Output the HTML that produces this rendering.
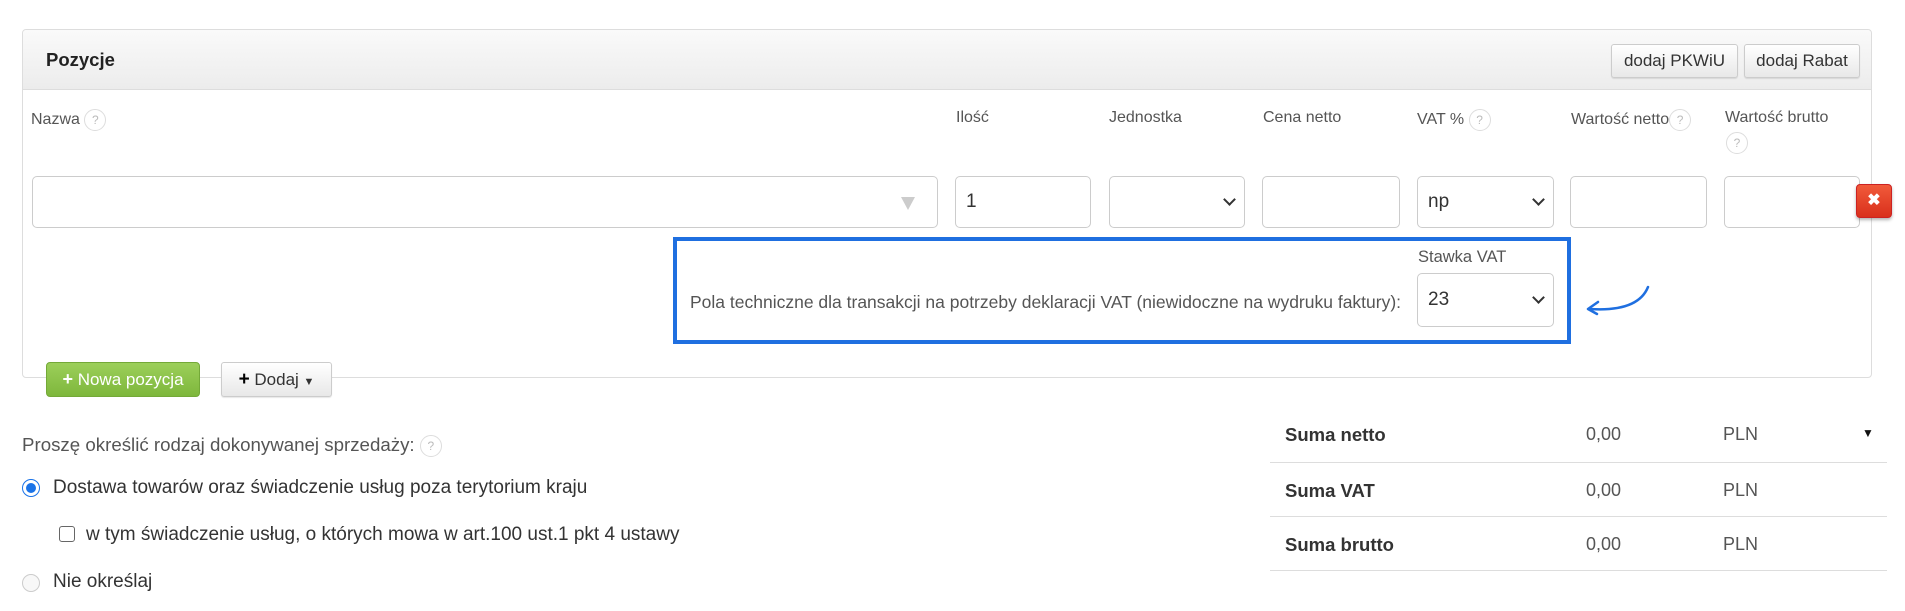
<!DOCTYPE html>
<html><head><meta charset="utf-8"><style>
*{box-sizing:border-box;margin:0;padding:0}
body{width:1905px;height:611px;background:#fff;font-family:"Liberation Sans",Arial,sans-serif;font-size:16px;color:#555;position:relative;overflow:hidden}
.a{position:absolute}
.panel{left:22px;top:29px;width:1850px;height:349px;border:1px solid #ddd;border-radius:4px}
.head{left:23px;top:30px;width:1848px;height:60px;background:linear-gradient(#fafafa,#ececec);border-bottom:1px solid #ddd;border-radius:4px 4px 0 0}
.btn{border:1px solid #ccc;border-radius:3px;background:linear-gradient(#fff,#e8e8e8);color:#333;font-size:17px;text-align:center;box-shadow:0 1px 1px rgba(0,0,0,.1)}
.inp{border:1px solid #ccc;border-radius:5px;background:#fff;height:52px;top:176px}
.lbl{top:109px;font-size:16px;color:#555}
.q{display:inline-block;width:22px;height:22px;border:1px solid #ddd;border-radius:50%;font-size:12px;color:#bbb;text-align:center;line-height:20px;vertical-align:middle}
.chev{position:absolute;right:10px;top:18px;width:9px;height:9px;border-right:2.5px solid #333;border-bottom:2.5px solid #333;transform:rotate(45deg)}
.val{position:absolute;left:10px;top:14px;font-size:19px;color:#333}
.sum{left:1270px;width:617px;height:1px;background:#ddd}
.st{font-weight:bold;color:#333;font-size:18.5px}
.nv{font-size:18px}
</style></head><body>
<div class="a panel"></div>
<div class="a head"></div>
<div class="a" style="left:46px;top:49px;font-weight:bold;font-size:18.5px;color:#222">Pozycje</div>
<div class="a btn" style="left:1611px;top:44px;width:127px;height:34px;line-height:32px">dodaj PKWiU</div>
<div class="a btn" style="left:1744px;top:44px;width:116px;height:34px;line-height:32px">dodaj Rabat</div>

<div class="a lbl" style="left:31px">Nazwa <span class="q">?</span></div>
<div class="a lbl" style="left:956px">Ilość</div>
<div class="a lbl" style="left:1109px">Jednostka</div>
<div class="a lbl" style="left:1263px">Cena netto</div>
<div class="a lbl" style="left:1417px">VAT % <span class="q">?</span></div>
<div class="a lbl" style="left:1571px">Wartość netto<span class="q">?</span></div>
<div class="a lbl" style="left:1725px">Wartość brutto</div>
<div class="a" style="left:1726px;top:132px"><span class="q">?</span></div>

<div class="a inp" style="left:32px;width:906px"><div style="position:absolute;right:22px;top:20px;width:0;height:0;border-left:7px solid transparent;border-right:7px solid transparent;border-top:13px solid #ccc"></div></div>
<div class="a inp" style="left:955px;width:136px"><span class="val">1</span></div>
<div class="a inp" style="left:1109px;width:136px"><span class="chev"></span></div>
<div class="a inp" style="left:1262px;width:138px"></div>
<div class="a inp" style="left:1417px;width:137px"><span class="val">np</span><span class="chev"></span></div>
<div class="a inp" style="left:1570px;width:137px"></div>
<div class="a inp" style="left:1724px;width:136px"></div>
<div class="a" style="left:1856px;top:184px;width:36px;height:34px;background:linear-gradient(#f15a3a,#d9301c);border-radius:4px;border:1px solid #c22;box-shadow:0 2px 3px rgba(0,0,0,.3);color:#fff;font-weight:bold;font-size:16px;text-align:center;line-height:31px">✖</div>

<div class="a" style="left:673px;top:237px;width:898px;height:107px;border:4px solid #1f6fe0"></div>
<div class="a" style="left:1418px;top:248px;font-size:16.5px">Stawka VAT</div>
<div class="a" style="left:690px;top:292px;font-size:17.5px">Pola techniczne dla transakcji na potrzeby deklaracji VAT (niewidoczne na wydruku faktury):</div>
<div class="a inp" style="left:1417px;top:273px;width:137px;height:54px"><span class="val" style="top:15px">23</span><span class="chev" style="top:19px"></span></div>
<svg class="a" style="left:1580px;top:280px" width="80" height="40"><path d="M68 7 Q58 32 10 29" stroke="#1f6fe0" stroke-width="2.5" fill="none" stroke-linecap="round"/><path d="M18 22 L8 29 L17 34" stroke="#1f6fe0" stroke-width="2.5" fill="none" stroke-linecap="round" stroke-linejoin="round"/></svg>

<div class="a" style="left:46px;top:362px;width:154px;height:35px;background:linear-gradient(#9ccf5a,#7eb73c);border:1px solid #74a938;border-radius:4px;color:#fff;font-size:17px;line-height:33px;text-align:center"><b style="font-size:18px">+</b> Nowa pozycja</div>
<div class="a btn" style="left:221px;top:362px;width:111px;height:35px;line-height:33px;color:#333"><b style="font-size:19px;color:#000">+</b> Dodaj <span style="font-size:11px">▼</span></div>

<div class="a" style="left:22px;top:434px;font-size:18.7px">Proszę określić rodzaj dokonywanej sprzedaży: <span class="q">?</span></div>
<div class="a" style="left:22px;top:479px;width:18px;height:18px;border-radius:50%;border:1px solid #1a73e8;background:#fff"><div style="margin:3px;width:10px;height:10px;border-radius:50%;background:#1a73e8"></div></div>
<div class="a" style="left:53px;top:477px;font-size:19px;color:#333">Dostawa towarów oraz świadczenie usług poza terytorium kraju</div>
<div class="a" style="left:59px;top:526px;width:16px;height:16px;border:1.5px solid #666;border-radius:3px"></div>
<div class="a" style="left:86px;top:524px;font-size:19px;color:#333">w tym świadczenie usług, o których mowa w art.100 ust.1 pkt 4 ustawy</div>
<div class="a" style="left:22px;top:574px;width:18px;height:18px;border-radius:50%;border:1px solid #ccc;background:#f8f8f8"></div>
<div class="a" style="left:53px;top:571px;font-size:19px;color:#333">Nie określaj</div>

<div class="a st" style="left:1285px;top:424px">Suma netto</div>
<div class="a nv" style="left:1586px;top:424px">0,00</div>
<div class="a nv" style="left:1723px;top:424px">PLN</div>
<div class="a" style="left:1862px;top:426px;font-size:12px;color:#111">▼</div>
<div class="a sum" style="top:462px"></div>
<div class="a st" style="left:1285px;top:480px">Suma VAT</div>
<div class="a nv" style="left:1586px;top:480px">0,00</div>
<div class="a nv" style="left:1723px;top:480px">PLN</div>
<div class="a sum" style="top:516px"></div>
<div class="a st" style="left:1285px;top:534px">Suma brutto</div>
<div class="a nv" style="left:1586px;top:534px">0,00</div>
<div class="a nv" style="left:1723px;top:534px">PLN</div>
<div class="a sum" style="top:570px"></div>
</body></html>
